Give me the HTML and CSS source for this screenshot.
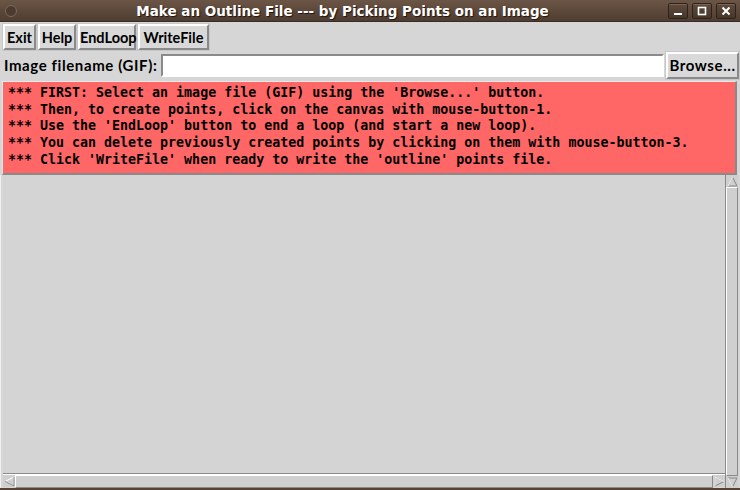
FILE: index.html
```html
<!DOCTYPE html>
<html lang="en">
<head>
<meta charset="UTF-8">
<title>Make an Outline File --- by Picking Points on an Image</title>
<link rel="stylesheet" href="styles.css">
</head>
<body>
<div class="window">
    <div class="titlebar">
        <span class="title-dot"></span>
        <span class="title">Make an Outline File --- by Picking Points on an Image</span>
        <div class="wm-buttons">
            <span class="wm-btn"><svg width="10" height="10" viewBox="0 0 10 10"><rect x="1" y="7" width="8" height="2" fill="#fff"/></svg></span>
            <span class="wm-btn"><svg width="10" height="10" viewBox="0 0 10 10"><rect x="1.5" y="1.5" width="7" height="7" fill="none" stroke="#fff" stroke-width="1.6"/></svg></span>
            <span class="wm-btn"><svg width="10" height="10" viewBox="0 0 10 10"><path d="M1.5 1.5 L8.5 8.5 M8.5 1.5 L1.5 8.5" stroke="#fff" stroke-width="2"/></svg></span>
        </div>
    </div>

    <div class="toolbar">
        <button class="tkbtn btn-exit">Exit</button>
        <button class="tkbtn btn-help">Help</button>
        <button class="tkbtn btn-endloop">EndLoop</button>
        <button class="tkbtn btn-write">WriteFile</button>
    </div>

    <div class="filerow">
        <label for="imgfile">Image filename (GIF):</label>
        <input type="text" id="imgfile">
        <button class="tkbtn btn-browse">Browse...</button>
    </div>

    <div class="msgbox">*** FIRST: Select an image file (GIF) using the 'Browse...' button.
*** Then, to create points, click on the canvas with mouse-button-1.
*** Use the 'EndLoop' button to end a loop (and start a new loop).
*** You can delete previously created points by clicking on them with mouse-button-3.
*** Click 'WriteFile' when ready to write the 'outline' points file.</div>

    <div class="canvas-area">
        <div class="canvas-col">
            <div class="canvas"></div>
            <div class="hscroll">
                <span class="arrow"><svg width="11" height="11" viewBox="0 0 11 11"><path d="M10 1 L1 5.5 L10 10 Z" fill="#cfcfcf" stroke="#fff" stroke-width="1"/><path d="M1 5.5 L10 10 L10 1" fill="none" stroke="#888" stroke-width="1"/></svg></span>
                <span class="trough"></span>
                <span class="arrow"><svg width="11" height="11" viewBox="0 0 11 11"><path d="M1 1 L10 5.5 L1 10 Z" fill="#cfcfcf" stroke="#888" stroke-width="1"/><path d="M1 10 L1 1 L10 5.5" fill="none" stroke="#fff" stroke-width="1"/></svg></span>
            </div>
        </div>
        <div class="vscroll">
            <span class="arrow"><svg width="11" height="11" viewBox="0 0 11 11"><path d="M5.5 1 L10 10 L1 10 Z" fill="#cfcfcf" stroke="#888" stroke-width="1"/><path d="M1 10 L5.5 1" fill="none" stroke="#fff" stroke-width="1"/></svg></span>
            <span class="trough"></span>
            <span class="arrow"><svg width="11" height="11" viewBox="0 0 11 11"><path d="M1 1 L10 1 L5.5 10 Z" fill="#cfcfcf" stroke="#888" stroke-width="1"/><path d="M1 1 L5.5 10" fill="none" stroke="#fff" stroke-width="1"/></svg></span>
        </div>
    </div>
</div>
</body>
</html>
```

FILE: styles.css
```css
/* Tk style window */
body {
    margin: 0;
    background: #d6d6d6;
    font-family: Lato, "DejaVu Sans", sans-serif;
}
.window {
    width: 740px;
    height: 490px;
    display: flex;
    flex-direction: column;
    background: #d6d6d6;
    border-bottom: 2px solid #5a4232;
    box-sizing: border-box;
    overflow: hidden;
}
.titlebar {
    height: 22px;
    flex: none;
    display: flex;
    align-items: center;
    background: linear-gradient(#6b5546, #4f3d31);
    border-bottom: 1px solid #3a2c22;
    box-sizing: border-box;
}
.title-dot {
    width: 10px;
    height: 10px;
    margin-left: 5px;
    border-radius: 50%;
    background: #4a3a2f;
    border: 1px solid #7d6a5c;
}
.title {
    flex: 1;
    text-align: center;
    color: #fff;
    font-family: "DejaVu Sans", sans-serif;
    font-weight: bold;
    font-size: 13.5px;
    text-shadow: 1px 1px 1px #1e140e;
}
.wm-buttons {
    display: flex;
    gap: 4px;
    margin-right: 4px;
}
.wm-btn {
    width: 20px;
    height: 16px;
    display: flex;
    align-items: center;
    justify-content: center;
    border: 1px solid #2d231c;
    border-radius: 2px;
    background: linear-gradient(#5f4b3e, #45362b);
    box-shadow: inset 0 1px 0 #7a6555;
    box-sizing: border-box;
}
.toolbar {
    display: flex;
    gap: 2px;
    padding: 2px 3px 0;
    height: 26px;
}
.tkbtn {
    font-family: Lato, "DejaVu Sans", sans-serif;
    font-weight: bold;
    font-size: 14.5px;
    color: #000;
    background: #d9d9d9;
    border: 2px solid;
    border-color: #fff #8a8a8a #8a8a8a #fff;
    box-shadow: 0 0 0 1px #c8c8c8;
    padding: 0;
    height: 26px;
    cursor: pointer;
    white-space: nowrap;
}
.btn-exit { width: 33px; }
.btn-help { width: 38px; }
.btn-endloop { width: 58px; }
.btn-write { width: 71px; }
.filerow {
    display: flex;
    align-items: center;
    height: 28px;
    margin-top: 1px;
    padding-left: 4px;
}
.filerow label {
    font-weight: bold;
    font-size: 15px;
    letter-spacing: 0.6px;
    width: 157px;
    white-space: nowrap;
}
.filerow input {
    width: 503px;
    height: 23px;
    box-sizing: border-box;
    border: 2px solid;
    border-color: #8a8a8a #fff #fff #8a8a8a;
    background: #fff;
    margin: 0;
    font-size: 13px;
}
.btn-browse {
    width: 73px;
    height: 27px;
    margin-left: 2px;
    font-size: 15px;
    letter-spacing: 0.6px;
}
.msgbox {
    margin: 2px 3px 0 2px;
    height: 94px;
    box-sizing: border-box;
    padding: 3px 5px 0;
    background: #ff6666;
    border: 1px solid;
    border-color: #e8e8e8 #8a8a8a #8a8a8a #e8e8e8;
    border-width: 1px 2px 2px 1px;
    font-family: "DejaVu Sans Mono", monospace;
    font-weight: bold;
    font-size: 13.3px;
    line-height: 16.7px;
    white-space: pre;
    color: #000;
}
.canvas-area {
    flex: 1;
    display: flex;
    padding: 0 2px 0 2px;
    border-left: 1px solid #f0f0f0;
}
.canvas-col {
    flex: 1;
    display: flex;
    flex-direction: column;
}
.canvas {
    flex: 1;
    background: #d4d4d4;
    border-bottom: 1px solid #8a8a8a;
}
.hscroll {
    height: 13px;
    display: flex;
    border-top: 1px solid #fff;
}
.vscroll {
    width: 12px;
    display: flex;
    flex-direction: column;
    border-left: 1px solid #8a8a8a;
}
.arrow {
    width: 12px;
    height: 12px;
    flex: none;
    display: flex;
    align-items: center;
    justify-content: center;
    background: #cfcfcf;
}
.trough {
    flex: 1;
    background: #cfcfcf;
    border: 1px solid;
    border-color: #fff #8a8a8a #8a8a8a #fff;
}
```
